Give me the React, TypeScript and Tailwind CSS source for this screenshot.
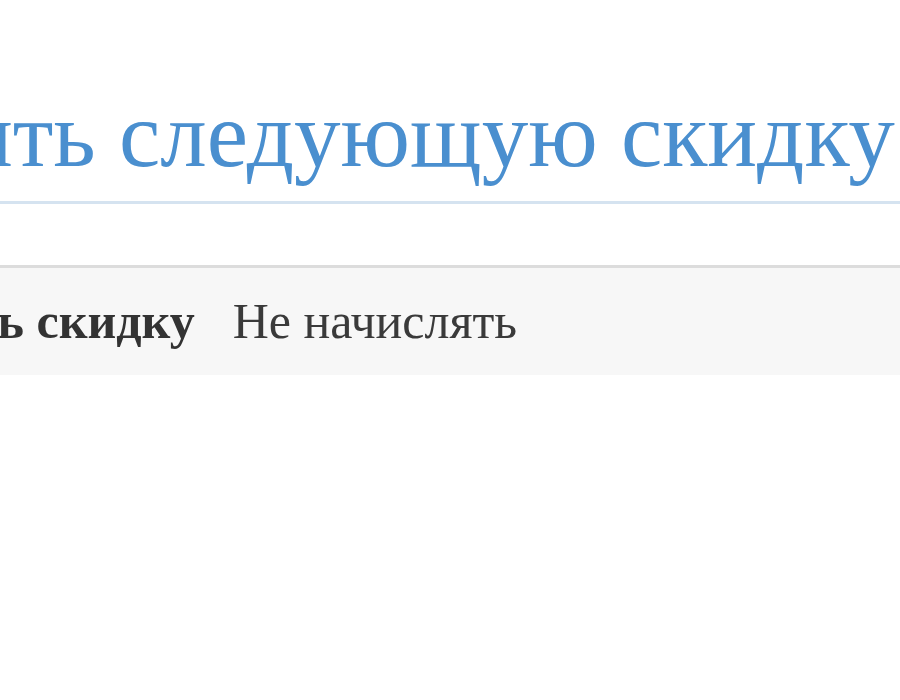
import React from "react";

// Confirmation dialog: discount question with two actions in the footer
export default function App() {
  return (
    <div className="w-[900px] h-[700px] overflow-hidden bg-white font-['Liberation_Serif',serif]">
      <div className="ml-[-366px] w-[1400px]">
        {/* Header */}
        <div className="pt-[75px] pb-[6px] pl-[40px] border-b-[3px] border-[#d5e3f0]">
          <h1 className="text-[93px] leading-[120px] text-[#4a8fcf] whitespace-nowrap font-normal">
            Начислить следующую скидку
          </h1>
        </div>

        {/* Body */}
        <div className="h-[61px]" />

        {/* Footer */}
        <div className="h-[110px] border-t-[3px] border-[#dcdcdc] bg-[#f7f7f7] flex items-center pl-[141px] gap-[38px] text-[50px] text-[#333] whitespace-nowrap">
          <button className="font-bold">Начислить скидку</button>
          <button className="text-[#3a3a3a]">Не начислять</button>
        </div>
      </div>
    </div>
  );
}
